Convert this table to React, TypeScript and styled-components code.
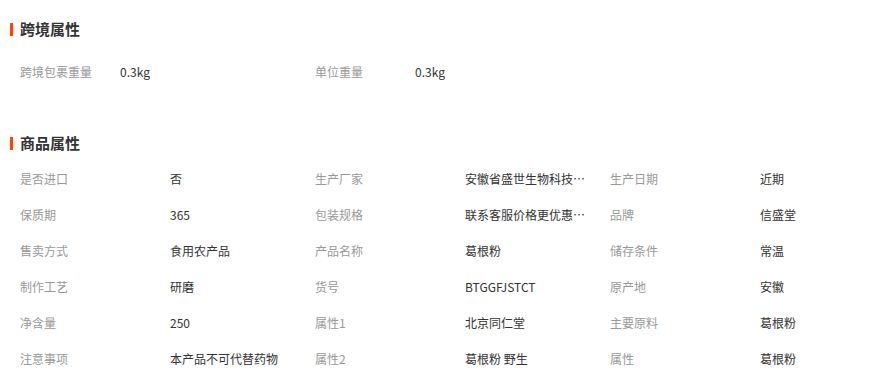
import React from "react";
import styled, { createGlobalStyle } from "styled-components";

const GlobalStyle = createGlobalStyle`
  html, body { margin: 0; padding: 0; background: #fff; }
  body {
    font-family: "Noto Sans CJK SC", "Noto Sans", sans-serif;
    font-size: 12px;
    color: #333;
  }
`;

const Page = styled.div`
  width: 890px;
  padding-top: 18px;
  box-sizing: border-box;
`;

const Section = styled.section<{ $gapBelow?: number }>`
  margin-bottom: ${(p) => p.$gapBelow ?? 0}px;
`;

const Title = styled.h3`
  position: relative;
  margin: 0;
  padding-left: 20px;
  height: 22px;
  line-height: 22px;
  font-size: 15px;
  font-weight: 700;
  color: #333;
  &::before {
    content: "";
    position: absolute;
    left: 10px;
    top: 5px;
    width: 3px;
    height: 13px;
    background: #ff4400;
  }
`;

const Grid = styled.div<{ $top: number }>`
  display: grid;
  grid-template-columns: repeat(3, 295px);
  padding-left: 20px;
  margin-top: ${(p) => p.$top}px;
`;

const Cell = styled.div<{ $labelWidth: number }>`
  display: flex;
  height: 36px;
  line-height: 36px;
  font-size: 12px;
  white-space: nowrap;
  & > span:first-child {
    width: ${(p) => p.$labelWidth}px;
  }
`;

const Label = styled.span`
  flex: none;
  color: #999;
`;

const Value = styled.span`
  flex: none;
  max-width: 121px;
  color: #333;
  overflow: hidden;
  text-overflow: ellipsis;
`;

const cross = [
  ["跨境包裹重量", "0.3kg"],
  ["单位重量", "0.3kg"],
];

const attrs = [
  ["是否进口", "否"],
  ["生产厂家", "安徽省盛世生物科技有限公司"],
  ["生产日期", "近期"],
  ["保质期", "365"],
  ["包装规格", "联系客服价格更优惠,量大从优"],
  ["品牌", "信盛堂"],
  ["售卖方式", "食用农产品"],
  ["产品名称", "葛根粉"],
  ["储存条件", "常温"],
  ["制作工艺", "研磨"],
  ["货号", "BTGGFJSTCT"],
  ["原产地", "安徽"],
  ["净含量", "250"],
  ["属性1", "北京同仁堂"],
  ["主要原料", "葛根粉"],
  ["注意事项", "本产品不可代替药物"],
  ["属性2", "葛根粉 野生"],
  ["属性", "葛根粉"],
];

export default function App() {
  return (
    <>
      <GlobalStyle />
      <Page>
        <Section $gapBelow={42}>
          <Title>跨境属性</Title>
          <Grid $top={14}>
            {cross.map(([k, v]) => (
              <Cell key={k} $labelWidth={100}>
                <Label>{k}</Label>
                <Value>{v}</Value>
              </Cell>
            ))}
          </Grid>
        </Section>
        <Section>
          <Title>商品属性</Title>
          <Grid $top={7}>
            {attrs.map(([k, v]) => (
              <Cell key={k} $labelWidth={150}>
                <Label>{k}</Label>
                <Value>{v}</Value>
              </Cell>
            ))}
          </Grid>
        </Section>
      </Page>
    </>
  );
}
